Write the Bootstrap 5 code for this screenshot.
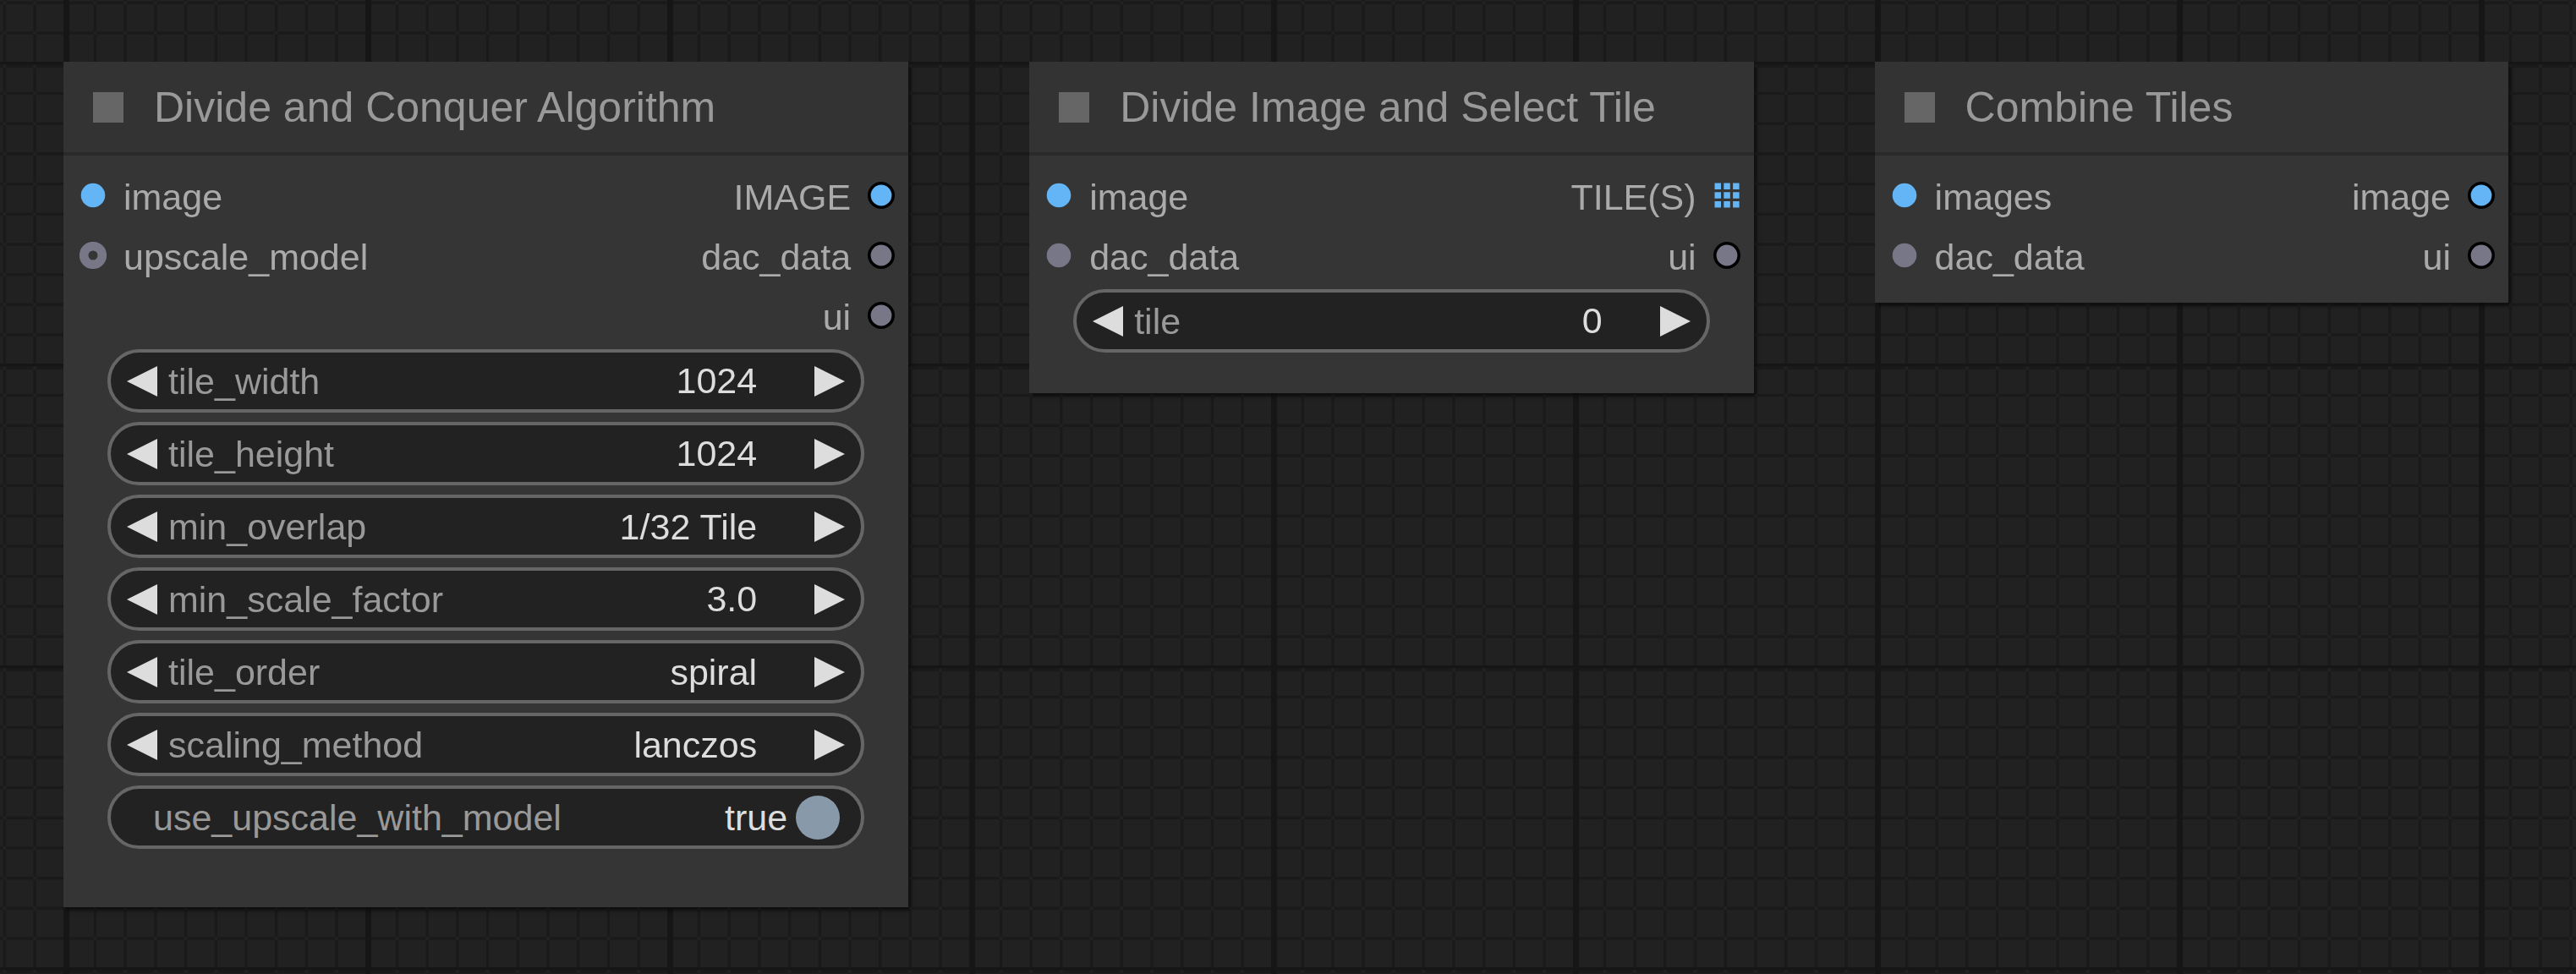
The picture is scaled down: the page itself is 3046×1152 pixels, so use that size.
<!DOCTYPE html>
<html lang="en">
<head>
<meta charset="utf-8">
<meta name="viewport" content="width=device-width, initial-scale=1">
<title>Node graph</title>
<link href="https://cdn.jsdelivr.net/npm/bootstrap@5.3.0/dist/css/bootstrap.min.css" rel="stylesheet">
<style>
  body { background: #212121; font-family: "Liberation Sans", Arial, sans-serif; font-size: 43px; color: #aaa; }
  .graph { min-height: 100vh; padding: 73px 80px 73px 75px; gap: 143px; }
  .graph-grid { z-index: -1; }
  .node { background: #353535; box-shadow: 3px 4px 4px rgba(0,0,0,.45); min-width: 0; }
  .node-wide { flex: 28 1 0; padding-bottom: 69px; }
  .node-mid { flex: 24 1 0; padding-bottom: 48px; }
  .node-slim { flex: 21 1 0; padding-bottom: 21px; }
  .node-head { background: #333; border-bottom: 4px solid #2a2a2a; height: 111px; padding: 0 35px; gap: 36px; }
  .node-title { font-size: 50px; line-height: 60px; font-weight: 400; color: #999; margin: 0; white-space: nowrap; }
  .fold { width: 36px; height: 36px; background: #666; border: 0; padding: 0; }
  .slots { padding: 11px 16px 5px 19px; }
  .slot { height: 71px; gap: 20px; line-height: 48px; white-space: nowrap; }
  .slot span { padding-top: 4px; }
  .port { width: 32px; height: 32px; flex: none; }
  .widgets { padding: 0 52px; gap: 11px; }
  .widget { height: 75px; border: 4px solid #666; background: #222; padding: 0 19px; color: #999; line-height: 48px; white-space: nowrap; }
  .widget-switch { padding: 0 25px 0 50px; }
  .step { width: 36px; height: 36px; border: 0; padding: 0; background: none; flex: none; display: flex; }
  .step svg { width: 36px; height: 36px; fill: #ddd; }
  .widget label { padding-left: 13px; }
  .widget-switch label { padding-left: 0; }
  .value { flex: 1 1 0; min-width: 0; background: none; border: 0; padding: 0; margin-right: 68px; color: #ddd; text-align: right; text-align-last: right; appearance: none; outline-offset: 4px; height: 56px; }
  .state { color: #ddd; margin-right: 10px; }
  .knob { width: 52px; height: 52px; appearance: none; background: #89a; margin: 0; }
  .knob:not(:checked) { background: #333; }
</style>
<script src="https://cdn.jsdelivr.net/npm/bootstrap@5.3.0/dist/js/bootstrap.bundle.min.js"></script>
</head>
<body>
<svg class="graph-grid position-fixed top-0 start-0 w-100 h-100" aria-hidden="true">
  <defs>
    <!-- one tile is 100 graph units, a thin line every 10 and a strong one at its start -->
    <pattern id="grid" width="100" height="100" patternUnits="userSpaceOnUse" patternTransform="translate(75 73) scale(3.57)">
      <rect width="100" height="100" fill="#212121"/>
      <path fill="#1a1a1a" d="M0 0h1v100h-1zM10 0h1v100h-1zM20 0h1v100h-1zM30 0h1v100h-1zM40 0h1v100h-1zM50 0h1v100h-1zM60 0h1v100h-1zM70 0h1v100h-1zM80 0h1v100h-1zM90 0h1v100h-1zM0 0v2h100v-2zM0 10v1h100v-1zM0 20v1h100v-1zM0 30v1h100v-1zM0 40v1h100v-1zM0 50v1h100v-1zM0 60v1h100v-1zM0 70v1h100v-1zM0 80v1h100v-1zM0 90v1h100v-1z"/>
      <path fill="#161616" d="M0 0h2v100h-2zM0 0h100v1h-100z"/>
    </pattern>
    <symbol id="port-in" viewBox="0 0 32 32"><circle cx="16" cy="16" r="14.3" fill="currentColor"/></symbol>
    <symbol id="port-out" viewBox="0 0 32 32"><circle cx="16" cy="16" r="14.2" fill="currentColor" stroke="#000" stroke-width="3.6"/></symbol>
    <symbol id="port-ring" viewBox="0 0 32 32"><circle cx="16" cy="16" r="10.8" fill="none" stroke="currentColor" stroke-width="10.6"/></symbol>
    <symbol id="port-list" viewBox="0 0 32 32"><path fill="currentColor" d="M1.500 1.500h7.500v7.500h-7.500zM12.300 1.500h7.500v7.500h-7.500zM23.100 1.500h7.500v7.500h-7.500zM1.500 12.300h7.500v7.500h-7.500zM12.300 12.300h7.500v7.500h-7.500zM23.100 12.300h7.500v7.500h-7.500zM1.500 23.100h7.500v7.500h-7.500zM12.300 23.100h7.500v7.500h-7.500zM23.100 23.100h7.500v7.500h-7.500z"/></symbol>
    <symbol id="arrow-prev" viewBox="0 0 36 36"><path d="M36 0v36L0 18z"/></symbol>
    <symbol id="arrow-next" viewBox="0 0 36 36"><path d="M0 0v36l36-18z"/></symbol>
  </defs>
  <rect width="100%" height="100%" fill="url(#grid)"/>
</svg>

<main class="graph d-flex align-items-start">

  <section class="node node-wide">
    <header class="node-head d-flex align-items-center">
      <button class="fold" type="button" aria-label="Collapse node"></button>
      <h2 class="node-title">Divide and Conquer Algorithm</h2>
    </header>
    <div class="slots d-flex justify-content-between">
      <div>
        <div class="slot d-flex align-items-center"><svg class="port" color="#64b5f6"><use href="#port-in"/></svg><span>image</span></div>
        <div class="slot d-flex align-items-center"><svg class="port" color="#778"><use href="#port-ring"/></svg><span>upscale_model</span></div>
      </div>
      <div>
        <div class="slot d-flex align-items-center justify-content-end"><span>IMAGE</span><svg class="port" color="#64b5f6"><use href="#port-out"/></svg></div>
        <div class="slot d-flex align-items-center justify-content-end"><span>dac_data</span><svg class="port" color="#778"><use href="#port-out"/></svg></div>
        <div class="slot d-flex align-items-center justify-content-end"><span>ui</span><svg class="port" color="#778"><use href="#port-out"/></svg></div>
      </div>
    </div>
    <div class="widgets d-flex flex-column">
      <div class="widget rounded-pill d-flex align-items-center">
        <button class="step" type="button" aria-label="Decrease"><svg><use href="#arrow-prev"/></svg></button>
        <label for="tile_width">tile_width</label><input class="value" id="tile_width" type="text" value="1024">
        <button class="step" type="button" aria-label="Increase"><svg><use href="#arrow-next"/></svg></button>
      </div>
      <div class="widget rounded-pill d-flex align-items-center">
        <button class="step" type="button" aria-label="Decrease"><svg><use href="#arrow-prev"/></svg></button>
        <label for="tile_height">tile_height</label><input class="value" id="tile_height" type="text" value="1024">
        <button class="step" type="button" aria-label="Increase"><svg><use href="#arrow-next"/></svg></button>
      </div>
      <div class="widget rounded-pill d-flex align-items-center">
        <button class="step" type="button" aria-label="Previous"><svg><use href="#arrow-prev"/></svg></button>
        <label for="min_overlap">min_overlap</label><select class="value" id="min_overlap"><option>1/32 Tile</option></select>
        <button class="step" type="button" aria-label="Next"><svg><use href="#arrow-next"/></svg></button>
      </div>
      <div class="widget rounded-pill d-flex align-items-center">
        <button class="step" type="button" aria-label="Decrease"><svg><use href="#arrow-prev"/></svg></button>
        <label for="min_scale_factor">min_scale_factor</label><input class="value" id="min_scale_factor" type="text" value="3.0">
        <button class="step" type="button" aria-label="Increase"><svg><use href="#arrow-next"/></svg></button>
      </div>
      <div class="widget rounded-pill d-flex align-items-center">
        <button class="step" type="button" aria-label="Previous"><svg><use href="#arrow-prev"/></svg></button>
        <label for="tile_order">tile_order</label><select class="value" id="tile_order"><option>spiral</option></select>
        <button class="step" type="button" aria-label="Next"><svg><use href="#arrow-next"/></svg></button>
      </div>
      <div class="widget rounded-pill d-flex align-items-center">
        <button class="step" type="button" aria-label="Previous"><svg><use href="#arrow-prev"/></svg></button>
        <label for="scaling_method">scaling_method</label><select class="value" id="scaling_method"><option>lanczos</option></select>
        <button class="step" type="button" aria-label="Next"><svg><use href="#arrow-next"/></svg></button>
      </div>
      <div class="widget widget-switch rounded-pill d-flex align-items-center">
        <label for="use_upscale_with_model">use_upscale_with_model</label>
        <span class="state ms-auto">true</span>
        <input class="knob rounded-circle" id="use_upscale_with_model" type="checkbox" checked>
      </div>
    </div>
  </section>

  <section class="node node-mid">
    <header class="node-head d-flex align-items-center">
      <button class="fold" type="button" aria-label="Collapse node"></button>
      <h2 class="node-title">Divide Image and Select Tile</h2>
    </header>
    <div class="slots d-flex justify-content-between">
      <div>
        <div class="slot d-flex align-items-center"><svg class="port" color="#64b5f6"><use href="#port-in"/></svg><span>image</span></div>
        <div class="slot d-flex align-items-center"><svg class="port" color="#778"><use href="#port-in"/></svg><span>dac_data</span></div>
      </div>
      <div>
        <div class="slot d-flex align-items-center justify-content-end"><span>TILE(S)</span><svg class="port" color="#64b5f6"><use href="#port-list"/></svg></div>
        <div class="slot d-flex align-items-center justify-content-end"><span>ui</span><svg class="port" color="#778"><use href="#port-out"/></svg></div>
      </div>
    </div>
    <div class="widgets d-flex flex-column">
      <div class="widget rounded-pill d-flex align-items-center">
        <button class="step" type="button" aria-label="Decrease"><svg><use href="#arrow-prev"/></svg></button>
        <label for="tile">tile</label><input class="value" id="tile" type="text" value="0">
        <button class="step" type="button" aria-label="Increase"><svg><use href="#arrow-next"/></svg></button>
      </div>
    </div>
  </section>

  <section class="node node-slim">
    <header class="node-head d-flex align-items-center">
      <button class="fold" type="button" aria-label="Collapse node"></button>
      <h2 class="node-title">Combine Tiles</h2>
    </header>
    <div class="slots pb-0 d-flex justify-content-between">
      <div>
        <div class="slot d-flex align-items-center"><svg class="port" color="#64b5f6"><use href="#port-in"/></svg><span>images</span></div>
        <div class="slot d-flex align-items-center"><svg class="port" color="#778"><use href="#port-in"/></svg><span>dac_data</span></div>
      </div>
      <div>
        <div class="slot d-flex align-items-center justify-content-end"><span>image</span><svg class="port" color="#64b5f6"><use href="#port-out"/></svg></div>
        <div class="slot d-flex align-items-center justify-content-end"><span>ui</span><svg class="port" color="#778"><use href="#port-out"/></svg></div>
      </div>
    </div>
  </section>

</main>
</body>
</html>
